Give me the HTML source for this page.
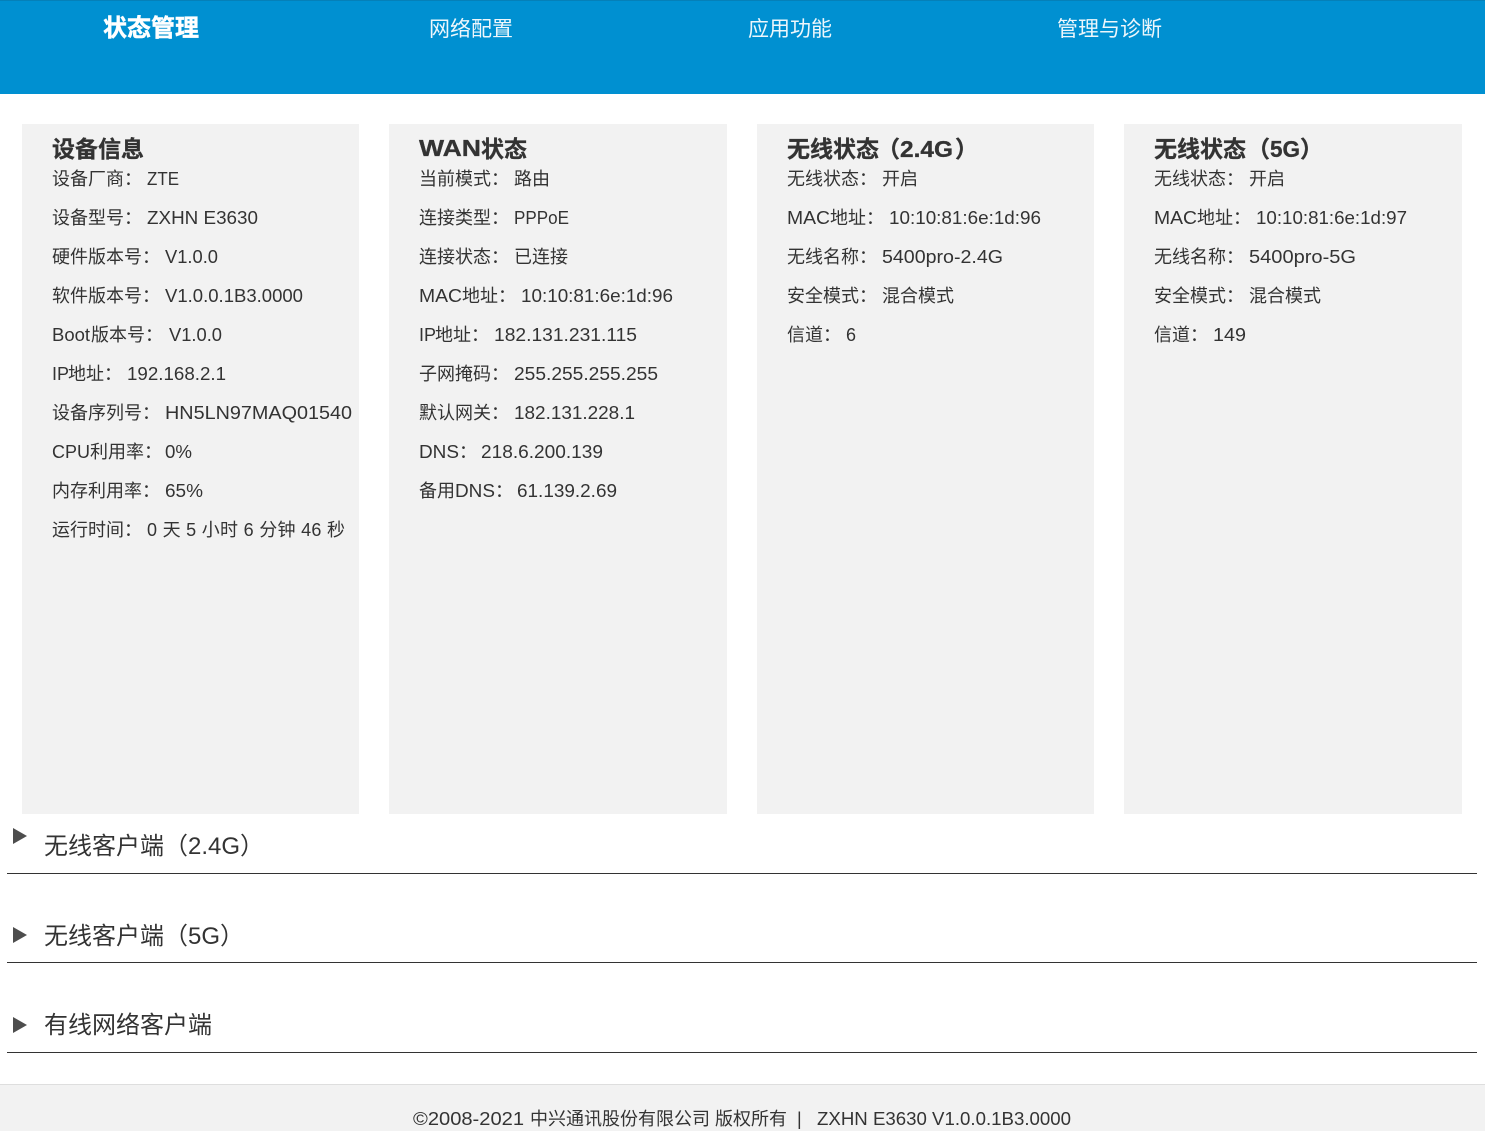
<!DOCTYPE html>
<html lang="zh-CN">
<head>
<meta charset="utf-8">
<title>状态管理</title>
<style>
html,body{margin:0;padding:0;background:#fff;width:1485px;height:1131px;overflow:hidden}
svg{display:block;position:absolute;left:0;top:0}
text{font-family:"Liberation Sans","Noto Sans CJK SC",sans-serif;fill:#333;font-size:18px}
.t{font-size:23px;font-weight:700;stroke:#333;stroke-width:.3px}
.n{font-size:21px;fill:#eef7fc}
.s{font-size:24px}
</style>
</head>
<body>
<svg width="1485" height="1131" viewBox="0 0 1485 1131" xmlns="http://www.w3.org/2000/svg">
<rect x="0" y="0" width="1485" height="94" fill="#0090d1"/>
<rect x="0" y="0" width="1485" height="1" fill="#0580b8"/>
<text x="103" y="36" style="font-size:24px;font-weight:700;fill:#fff;stroke:#fff;stroke-width:.45px">状态管理</text>
<text x="429" y="36" class="n">网络配置</text>
<text x="748" y="36" class="n">应用功能</text>
<text x="1057" y="36" class="n">管理与诊断</text>

<rect x="22" y="124" width="337" height="690" fill="#f2f2f2"/>
<rect x="389" y="124" width="338" height="690" fill="#f2f2f2"/>
<rect x="757" y="124" width="337" height="690" fill="#f2f2f2"/>
<rect x="1124" y="124" width="338" height="690" fill="#f2f2f2"/>

<text x="52" y="157" class="t">设备信息</text>
<text x="52" y="185">设备厂商：</text><text x="147" y="185" textLength="32" lengthAdjust="spacingAndGlyphs">ZTE</text>
<text x="52" y="224">设备型号：</text><text x="147" y="224" textLength="111" lengthAdjust="spacingAndGlyphs">ZXHN E3630</text>
<text x="52" y="263">硬件版本号：</text><text x="165" y="263" textLength="53" lengthAdjust="spacingAndGlyphs">V1.0.0</text>
<text x="52" y="302">软件版本号：</text><text x="165" y="302" textLength="138" lengthAdjust="spacingAndGlyphs">V1.0.0.1B3.0000</text>
<text x="52" y="341" textLength="38" lengthAdjust="spacingAndGlyphs">Boot</text><text x="91" y="341">版本号：</text><text x="169" y="341" textLength="53" lengthAdjust="spacingAndGlyphs">V1.0.0</text>
<text x="52" y="380">IP</text><text x="68" y="380">地址：</text><text x="127" y="380" textLength="99" lengthAdjust="spacingAndGlyphs">192.168.2.1</text>
<text x="52" y="419">设备序列号：</text><text x="165" y="419" textLength="187" lengthAdjust="spacingAndGlyphs">HN5LN97MAQ01540</text>
<text x="52" y="458">CPU</text><text x="90" y="458">利用率：</text><text x="165" y="458" textLength="27" lengthAdjust="spacingAndGlyphs">0%</text>
<text x="52" y="497">内存利用率：</text><text x="165" y="497" textLength="38" lengthAdjust="spacingAndGlyphs">65%</text>
<text x="52" y="536">运行时间：</text><text x="147" y="536" textLength="198">0 天 5 小时 6 分钟 46 秒</text>

<text x="419" y="156" class="t" textLength="62" lengthAdjust="spacingAndGlyphs">WAN</text><text x="481" y="157" class="t">状态</text>
<text x="419" y="185">当前模式：</text><text x="514" y="185">路由</text>
<text x="419" y="224">连接类型：</text><text x="514" y="224" textLength="55" lengthAdjust="spacingAndGlyphs">PPPoE</text>
<text x="419" y="263">连接状态：</text><text x="514" y="263">已连接</text>
<text x="419" y="302" textLength="43" lengthAdjust="spacingAndGlyphs">MAC</text><text x="462" y="302">地址：</text><text x="521" y="302" textLength="152" lengthAdjust="spacingAndGlyphs">10:10:81:6e:1d:96</text>
<text x="419" y="341">IP</text><text x="435" y="341">地址：</text><text x="494" y="341" textLength="143" lengthAdjust="spacingAndGlyphs">182.131.231.115</text>
<text x="419" y="380">子网掩码：</text><text x="514" y="380" textLength="144" lengthAdjust="spacingAndGlyphs">255.255.255.255</text>
<text x="419" y="419">默认网关：</text><text x="514" y="419" textLength="121" lengthAdjust="spacingAndGlyphs">182.131.228.1</text>
<text x="419" y="458" textLength="40" lengthAdjust="spacingAndGlyphs">DNS</text><text x="459" y="458">：</text><text x="481" y="458" textLength="122" lengthAdjust="spacingAndGlyphs">218.6.200.139</text>
<text x="419" y="497">备用</text><text x="455" y="497" textLength="40" lengthAdjust="spacingAndGlyphs">DNS</text><text x="495" y="497">：</text><text x="517" y="497" textLength="100" lengthAdjust="spacingAndGlyphs">61.139.2.69</text>

<text x="787" y="157" class="t">无线状态</text><text x="877" y="157" class="t">（</text><text x="900" y="157" class="t" textLength="53" lengthAdjust="spacingAndGlyphs">2.4G</text><text x="955" y="157" class="t">）</text>
<text x="787" y="185">无线状态：</text><text x="882" y="185">开启</text>
<text x="787" y="224" textLength="43" lengthAdjust="spacingAndGlyphs">MAC</text><text x="830" y="224">地址：</text><text x="889" y="224" textLength="152" lengthAdjust="spacingAndGlyphs">10:10:81:6e:1d:96</text>
<text x="787" y="263">无线名称：</text><text x="882" y="263" textLength="121" lengthAdjust="spacingAndGlyphs">5400pro-2.4G</text>
<text x="787" y="302">安全模式：</text><text x="882" y="302">混合模式</text>
<text x="787" y="341">信道：</text><text x="846" y="341">6</text>

<text x="1154" y="157" class="t">无线状态</text><text x="1247" y="157" class="t">（</text><text x="1270" y="157" class="t" textLength="30" lengthAdjust="spacingAndGlyphs">5G</text><text x="1300" y="157" class="t">）</text>
<text x="1154" y="185">无线状态：</text><text x="1249" y="185">开启</text>
<text x="1154" y="224" textLength="43" lengthAdjust="spacingAndGlyphs">MAC</text><text x="1197" y="224">地址：</text><text x="1256" y="224" textLength="151" lengthAdjust="spacingAndGlyphs">10:10:81:6e:1d:97</text>
<text x="1154" y="263">无线名称：</text><text x="1249" y="263" textLength="107" lengthAdjust="spacingAndGlyphs">5400pro-5G</text>
<text x="1154" y="302">安全模式：</text><text x="1249" y="302">混合模式</text>
<text x="1154" y="341">信道：</text><text x="1213" y="341" textLength="33" lengthAdjust="spacingAndGlyphs">149</text>

<path d="M13 828 L27 836 L13 844 Z" fill="#4d4d4d"/>
<text x="44" y="854" class="s">无线客户端（2.4G）</text>
<rect x="7" y="873" width="1470" height="1" fill="#333"/>

<path d="M13 927 L27 935 L13 943 Z" fill="#4d4d4d"/>
<text x="44" y="944" class="s">无线客户端（5G）</text>
<rect x="7" y="962" width="1470" height="1" fill="#333"/>

<path d="M13 1017 L27 1025 L13 1033 Z" fill="#4d4d4d"/>
<text x="44" y="1033" class="s">有线网络客户端</text>
<rect x="7" y="1052" width="1470" height="1" fill="#333"/>

<rect x="0" y="1084" width="1485" height="47" fill="#f2f2f2"/>
<rect x="0" y="1084" width="1485" height="1" fill="#dedede"/>
<text x="413" y="1125" textLength="111" lengthAdjust="spacingAndGlyphs">©2008-2021</text>
<text x="530" y="1125">中兴通讯股份有限公司</text>
<text x="715" y="1125">版权所有</text>
<text x="797" y="1125">|</text>
<text x="817" y="1125" textLength="254" lengthAdjust="spacingAndGlyphs">ZXHN E3630 V1.0.0.1B3.0000</text>
</svg>
</body>
</html>
